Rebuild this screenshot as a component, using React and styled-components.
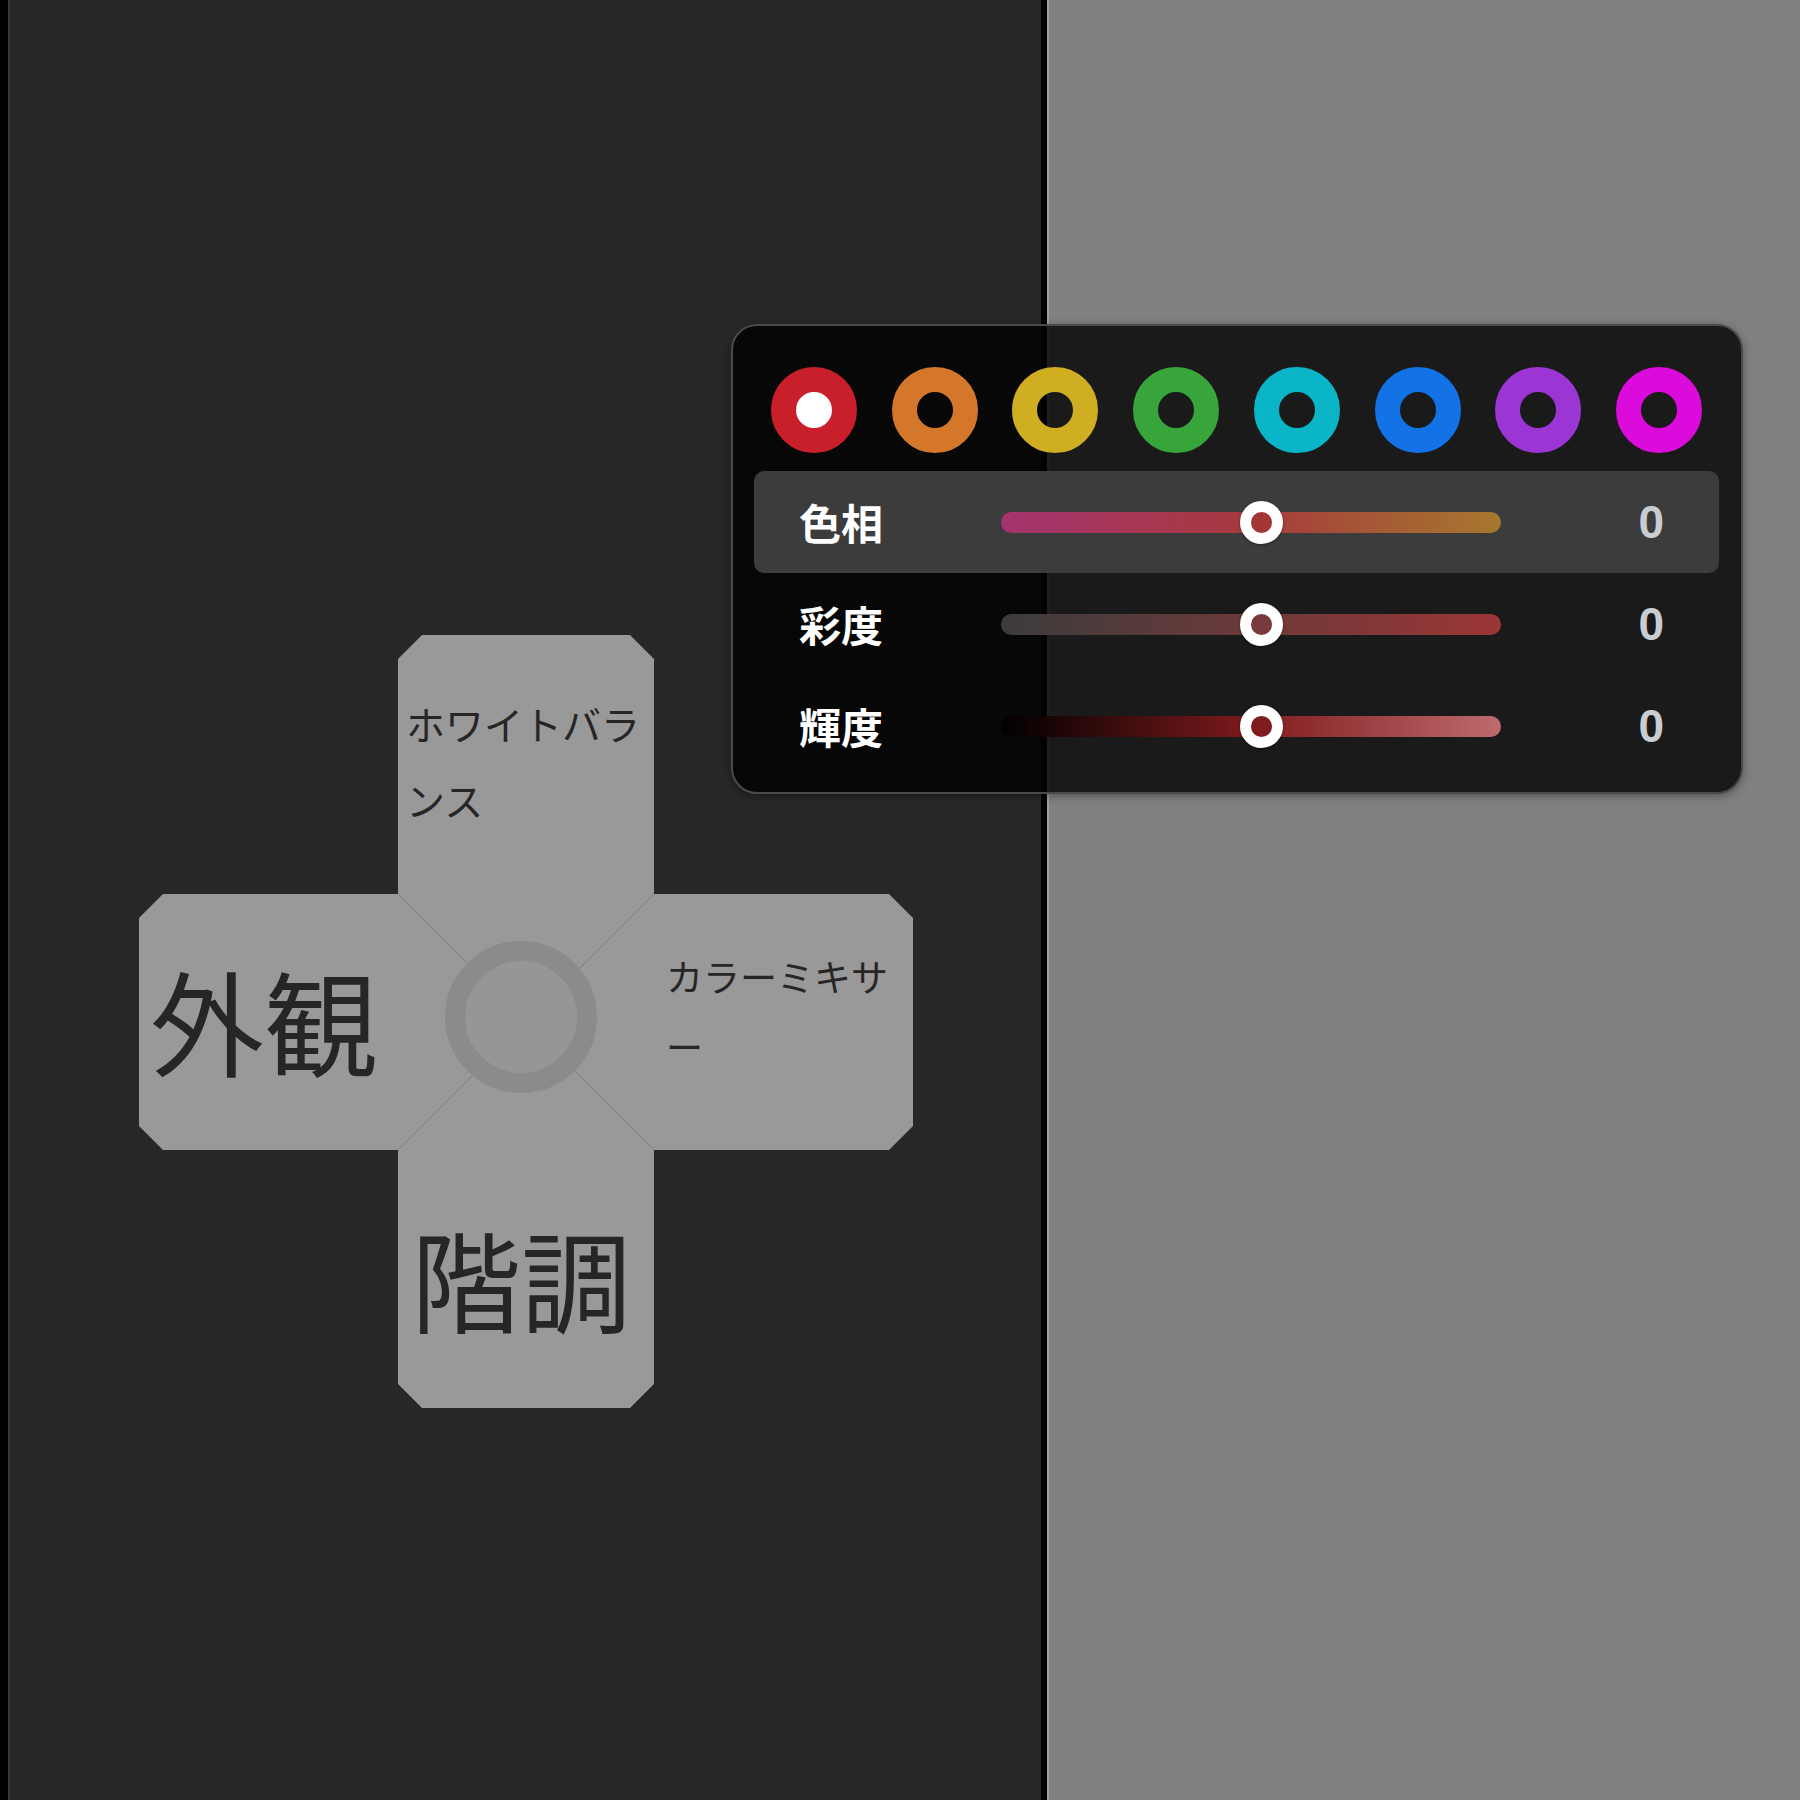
import React from 'react';
import styled, { createGlobalStyle } from 'styled-components';

const GlobalStyle = createGlobalStyle`
  html, body {
    margin: 0;
    background: #000;
  }
  body {
    font-family: 'Noto Sans CJK JP', 'Noto Sans', sans-serif;
  }
`;

const Page = styled.div`
  position: relative;
  display: flex;
  min-height: 100vh;
  margin-left: 8px;
`;

const LeftPane = styled.section`
  box-sizing: border-box;
  flex: 0 0 1033px;
  background: #272727;
  border-left: 2px solid #363636;
  padding: 635px 0 0 129px;
`;

const Divider = styled.div`
  flex: 0 0 6px;
  background: #000;
`;

const RightPane = styled.section`
  flex: 1;
  background: #808080;
  border-left: 2px solid #a2a2a2;
`;

/* --- cross menu --- */

const Cross = styled.nav`
  display: grid;
  grid-template-columns: 259px 256px 259px;
  grid-template-rows: 259px 256px 258px;
  width: 774px;
`;

const shapes = {
  top: 'polygon(24px 0, calc(100% - 24px) 0, 100% 24px, 100% 259px, 50% 387px, 0 259px, 0 24px)',
  bottom:
    'polygon(0 256px, 50% 128px, 100% 256px, 100% calc(100% - 24px), calc(100% - 24px) 100%, 24px 100%, 0 calc(100% - 24px))',
  left: 'polygon(24px 0, 259px 0, 387px 50%, 259px 100%, 24px 100%, 0 calc(100% - 24px), 0 24px)',
  right:
    'polygon(256px 0, calc(100% - 24px) 0, 100% 24px, 100% calc(100% - 24px), calc(100% - 24px) 100%, 256px 100%, 128px 50%)',
};

const areas = {
  top: '1 / 2 / 3 / 3',
  bottom: '2 / 2 / 4 / 3',
  left: '2 / 1 / 3 / 3',
  right: '2 / 2 / 3 / 4',
};

const Arm = styled.div`
  grid-area: ${(p) => areas[p.$side]};
  display: flex;
  flex-direction: ${(p) => (p.$side === 'top' || p.$side === 'bottom' ? 'column' : 'row')};
  background: #999;
  clip-path: ${(p) => shapes[p.$side]};
  color: #262626;
`;

const ArmLabel = styled.div`
  box-sizing: border-box;
  flex: 0 0 ${(p) => p.$length}px;
  margin: ${(p) => (p.$side === 'right' ? '0 0 0 256px' : p.$side === 'bottom' ? '256px 0 0' : '0')};
  padding: ${(p) => p.$pad};
  font-size: ${(p) => p.$size}px;
  line-height: ${(p) => p.$lh};
  font-weight: 400;
  overflow-wrap: anywhere;
`;

const Hub = styled.div`
  position: relative;
  z-index: 1;
  grid-area: 2 / 2 / 3 / 3;
  place-self: center;
  box-sizing: border-box;
  width: 152px;
  height: 152px;
  margin: 0 11px 11px 0;
  border-radius: 50%;
  border: 20px solid #8b8b8b;
  background: #969696;
`;

/* --- colour mixer popover --- */

const Panel = styled.div`
  position: absolute;
  z-index: 2;
  left: 723px;
  top: 324px;
  box-sizing: border-box;
  width: 1012px;
  padding: 41px 22px 15px 21px;
  border: 2px solid #4a4a4a;
  border-radius: 26px;
  background: rgba(0, 0, 0, 0.8);
  box-shadow: 0 2px 8px rgba(0, 0, 0, 0.35);
`;

const Swatches = styled.div`
  display: flex;
  justify-content: space-between;
  padding: 0 17px;
  margin-bottom: 18px;
`;

const Swatch = styled.button`
  box-sizing: border-box;
  width: 86px;
  height: 86px;
  padding: 0;
  border-radius: 50%;
  border: 25px solid ${(p) => p.$color};
  background: ${(p) => (p.$selected ? '#fff' : 'transparent')};
  cursor: pointer;
`;

const Row = styled.div`
  box-sizing: border-box;
  display: grid;
  grid-template-columns: 202px 500px 1fr;
  align-items: center;
  height: 102px;
  padding: 0 55px 0 45px;
  border-radius: 10px;
  background: ${(p) => (p.$active ? '#3c3c3c' : 'transparent')};
`;

const Label = styled.span`
  color: #fff;
  font-size: 42px;
  font-weight: 700;
  line-height: 1;
`;

const Track = styled.div`
  position: relative;
  height: 21px;
  border-radius: 11px;
  background: ${(p) => p.$gradient};
`;

const Thumb = styled.div`
  position: absolute;
  top: 50%;
  left: calc(52.1% - 21.5px);
  box-sizing: border-box;
  width: 43px;
  height: 43px;
  margin-top: -21.5px;
  border-radius: 50%;
  border: 11px solid #fff;
  background: ${(p) => p.$dot};
  box-shadow: 0 1px 3px rgba(0, 0, 0, 0.4);
`;

const Value = styled.span`
  text-align: right;
  color: #c9cdd1;
  font-family: 'Liberation Sans', Arial, sans-serif;
  font-size: 46px;
  font-weight: 700;
  line-height: 1;
`;

const swatches = [
  '#c81f2a',
  '#d4772b',
  '#cfae22',
  '#37a53b',
  '#0bb5c8',
  '#1272e6',
  '#9b36d5',
  '#db0bdc',
];

const sliders = [
  {
    label: '色相',
    gradient: 'linear-gradient(to right, #a4336f, #a63a3c 50%, #a6782e)',
    dot: '#a33535',
    active: true,
  },
  {
    label: '彩度',
    gradient: 'linear-gradient(to right, #3c3c3c, #6c3939 50%, #9c3636)',
    dot: '#783a3a',
  },
  {
    label: '輝度',
    gradient: 'linear-gradient(to right, #000, #7f1a1c 50%, #be6b6e)',
    dot: '#801c20',
  },
];

const App = () => {
  return (
    <>
      <GlobalStyle />
      <Page>
        <LeftPane>
          <Cross>
            <Arm $side='top'>
              <ArmLabel $side='top' $length={259} $size={39} $lh='76px' $pad='50px 8px 0'>
                ホワイトバランス
              </ArmLabel>
            </Arm>
            <Arm $side='left'>
              <ArmLabel $side='left' $length={259} $size={114} $lh='1' $pad='68px 0 0 11px'>
                外観
              </ArmLabel>
            </Arm>
            <Arm $side='right'>
              <ArmLabel $side='right' $length={259} $size={37} $lh='70px' $pad='47px 12px 0'>
                カラーミキサー
              </ArmLabel>
            </Arm>
            <Arm $side='bottom'>
              <ArmLabel $side='bottom' $length={258} $size={110} $lh='1' $pad='72px 0 0 13px'>
                階調
              </ArmLabel>
            </Arm>
            <Hub />
          </Cross>
        </LeftPane>
        <Divider />
        <RightPane />

        <Panel>
          <Swatches>
            {swatches.map((c, i) => (
              <Swatch key={c} $color={c} $selected={i === 0} />
            ))}
          </Swatches>
          {sliders.map((s) => (
            <Row key={s.label} $active={s.active}>
              <Label>{s.label}</Label>
              <Track $gradient={s.gradient}>
                <Thumb $dot={s.dot} />
              </Track>
              <Value>0</Value>
            </Row>
          ))}
        </Panel>
      </Page>
    </>
  );
};

export default App;
